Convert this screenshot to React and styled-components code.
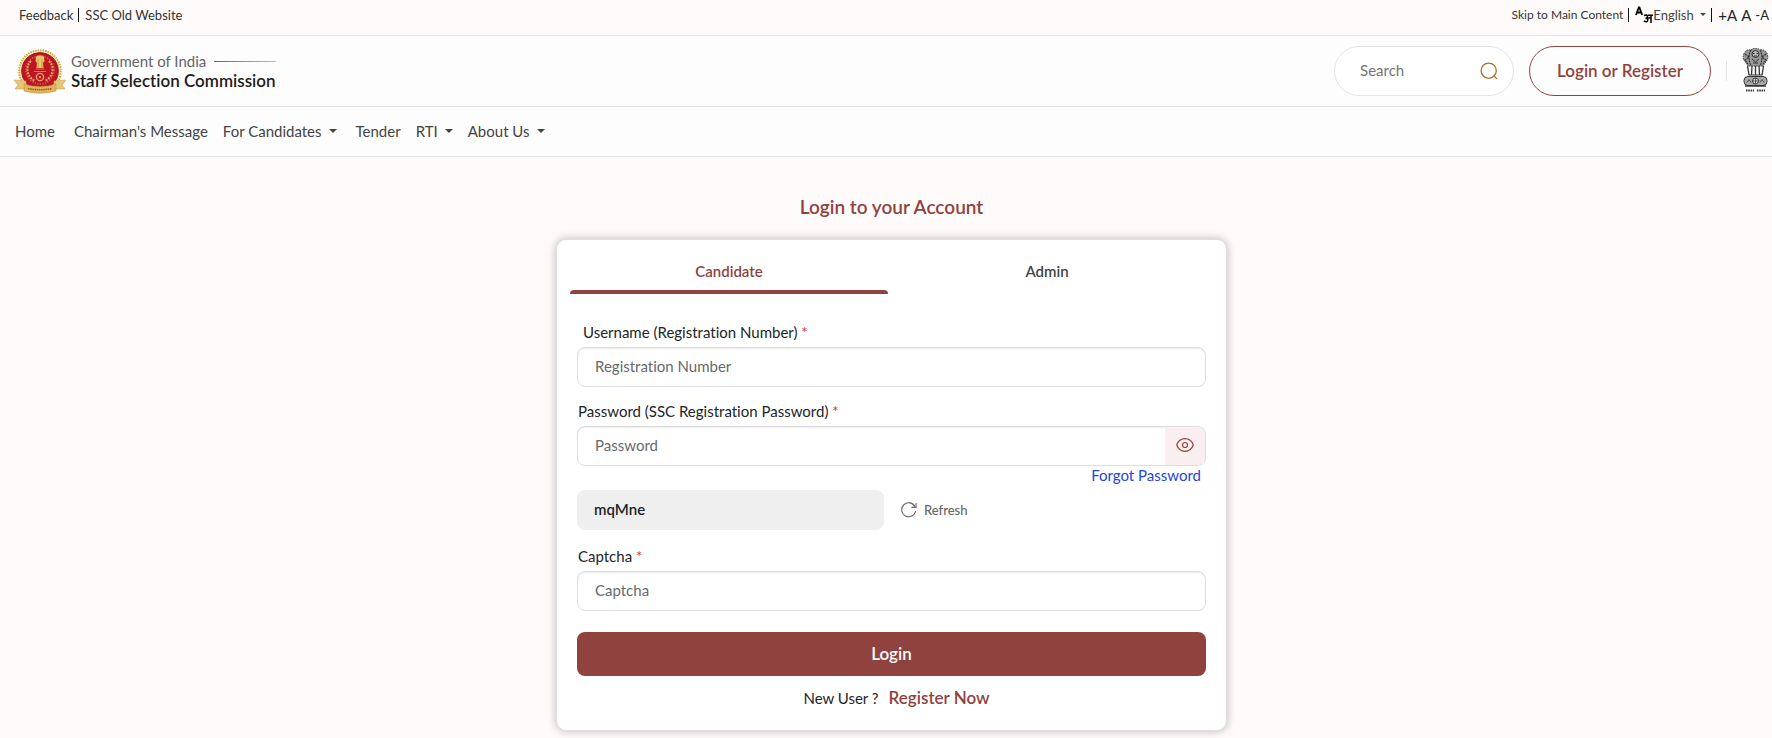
import { useState } from "react";
import styled, { createGlobalStyle } from "styled-components";

export default function App() {
    const [tab, setTab] = useState("candidate");
    const [showPassword, setShowPassword] = useState(false);

    const handleSubmit = (e) => {
        e.preventDefault();
    };

    return (
        <>
            <GlobalStyle />
            <TopBar>
                <TopGroup>
                    <TopLink href="#feedback">Feedback</TopLink>
                    <Separator />
                    <TopLink href="#old">SSC Old Website</TopLink>
                </TopGroup>
                <TopGroup>
                    <TopLink href="#main" $small>Skip to Main Content</TopLink>
                    <Separator />
                    <Language>
                        <LanguageIcon />
                        <LanguageSelect aria-label="Language" defaultValue="en">
                            <option value="en">English</option>
                        </LanguageSelect>
                        <Caret $small />
                    </Language>
                    <Separator />
                    <SizeButtons>
                        <SizeButton type="button" $size={15}>+A</SizeButton>
                        <SizeButton type="button" $size={15}>A</SizeButton>
                        <SizeButton type="button" $size={13}>-A</SizeButton>
                    </SizeButtons>
                </TopGroup>
            </TopBar>

            <Header>
                <Brand href="#home">
                    <CommissionLogo />
                    <BrandText>
                        <Government>Government of India</Government>
                        <Commission>Staff Selection Commission</Commission>
                    </BrandText>
                </Brand>
                <HeaderActions>
                    <SearchBox>
                        <SearchInput type="text" placeholder="Search" aria-label="Search" />
                        <SearchIcon />
                    </SearchBox>
                    <RegisterButton type="button">Login or Register</RegisterButton>
                    <Divider />
                    <Emblem />
                </HeaderActions>
            </Header>

            <Nav>
                <NavLink href="#home" $wide>Home</NavLink>
                <NavLink href="#chairman">Chairman's Message</NavLink>
                <NavButton type="button" $wide>For Candidates <Caret /></NavButton>
                <NavLink href="#tender">Tender</NavLink>
                <NavButton type="button">RTI <Caret /></NavButton>
                <NavButton type="button">About Us <Caret /></NavButton>
            </Nav>

            <Main id="main">
                <Title>Login to your Account</Title>
                <Card>
                    <Tabs role="tablist">
                        <Tab type="button" role="tab" aria-selected={tab === "candidate"} $active={tab === "candidate"} onClick={() => setTab("candidate")}>
                            Candidate
                        </Tab>
                        <Tab type="button" role="tab" aria-selected={tab === "admin"} $active={tab === "admin"} onClick={() => setTab("admin")}>
                            Admin
                        </Tab>
                    </Tabs>
                    <Form onSubmit={handleSubmit}>
                        <Label htmlFor="username" $indent>Username (Registration Number) <Required>*</Required></Label>
                        <InputGroup>
                            <Input id="username" type="text" placeholder="Registration Number" />
                        </InputGroup>

                        <Label htmlFor="password">Password (SSC Registration Password) <Required>*</Required></Label>
                        <InputGroup>
                            <Input id="password" type={showPassword ? "text" : "password"} placeholder="Password" />
                            <EyeButton type="button" aria-label="Show password" onClick={() => setShowPassword(!showPassword)}>
                                <EyeIcon />
                            </EyeButton>
                        </InputGroup>
                        <ForgotLink href="#forgot">Forgot Password</ForgotLink>

                        <CaptchaRow>
                            <CaptchaCode>mqMne</CaptchaCode>
                            <RefreshButton type="button">
                                <RefreshIcon />
                                Refresh
                            </RefreshButton>
                        </CaptchaRow>

                        <Label htmlFor="captcha">Captcha <Required>*</Required></Label>
                        <InputGroup>
                            <Input id="captcha" type="text" placeholder="Captcha" />
                        </InputGroup>

                        <LoginButton type="submit">Login</LoginButton>
                        <NewUser>
                            New User ? <RegisterLink href="#register">Register Now</RegisterLink>
                        </NewUser>
                    </Form>
                </Card>
            </Main>
        </>
    );
}

function Caret({ $small }) {
    return (
        <CaretSvg $small={$small} viewBox="0 0 8 4" aria-hidden="true">
            <path d="M0 0h8L4 4z" fill="currentColor" />
        </CaretSvg>
    );
}

function LanguageIcon() {
    return (
        <svg width="18" height="18" viewBox="0 0 18 18" fill="none" stroke="#000" strokeWidth="1.8" aria-hidden="true">
            <path d="M1 9L3.8 1.5h.6L7.2 9M2.2 6.5h3.9" />
            <path d="M9 9.500q3.500-1.500 3.500 1 0 1.500-2 1.700 2.500.2 2.300 2-.5 2.600-4 .8M12.500 12h3M13 9.200h5M16 9v8" strokeWidth="1.5" />
        </svg>
    );
}

function SearchIcon() {
    return (
        <svg width="18" height="18" viewBox="0 0 18 18" fill="none" stroke="#a5742e" strokeWidth="1.3" strokeLinecap="round" aria-hidden="true">
            <circle cx="8.7" cy="8.7" r="7.6" />
            <path d="M14 14l2.6 2.6" />
        </svg>
    );
}

function EyeIcon() {
    return (
        <svg width="18" height="14" viewBox="0 0 18 14" fill="none" stroke="#90423e" strokeWidth="1.2" aria-hidden="true">
            <path d="M.7 7C2.2 3 5.2.7 9 .7S15.8 3 17.3 7C15.8 11 12.8 13.3 9 13.3S2.200 11 .7 7z" />
            <circle cx="9" cy="7" r="2.5" />
        </svg>
    );
}

function RefreshIcon() {
    return (
        <svg width="16" height="16" viewBox="0 0 16 16" fill="none" stroke="#666" strokeWidth="1.1" aria-hidden="true">
            <path d="M14.6 9A7 7 0 1 1 14 4.7" />
            <path d="M15 1v4.4h-4.6" />
        </svg>
    );
}

function CommissionLogo() {
    return (
        <svg width="52" height="45" viewBox="0 0 52 45" aria-hidden="true">
            <circle cx="26" cy="22" r="20.8" fill="#f8ecc8" stroke="#d6a63c" strokeWidth="2" strokeDasharray="1.5 1" />
            <circle cx="26" cy="22" r="18.3" fill="#bd1620" stroke="#96121a" strokeWidth="1" />
            <circle cx="26" cy="21" r="14" fill="none" stroke="#d9645a" strokeWidth="1.6" strokeDasharray="1.2 1.4" />
            <path d="M17 12c-6 6-4 16 4 20M35 12c6 6 4 16-4 20" fill="none" stroke="#e0a26a" strokeWidth="2" strokeDasharray="2 1" />
            <path d="M22 8c1-2 7-2 8 0l.5 4-1.500 2 .5 5h-7l.5-5-1.500-2z" fill="#edc765" />
            <path d="M24 10v9M28 10v9M21.500 20h9" stroke="#c89032" strokeWidth=".8" />
            <path d="M20 22.500h12" stroke="#dc7468" />
            <circle cx="26" cy="28" r="3.6" fill="none" stroke="#e5a178" strokeWidth="1.4" />
            <circle cx="26" cy="28" r="1" fill="#edc765" />
            <path d="M0 31l12 1v8H1l3-4zM52 31l-12 1v8h11l-3-4z" fill="#e6c675" stroke="#c79a44" strokeWidth=".5" />
            <path d="M10 35q16 5 32 0v7q-16 4.500-32 0z" fill="#dfb65b" stroke="#b78431" strokeWidth=".5" />
            <path d="M14 39.500q12 2.500 24 0" fill="none" stroke="#9a5a25" strokeWidth="1.6" strokeDasharray="1.5 .7" />
        </svg>
    );
}

function Emblem() {
    return (
        <svg width="27" height="46" viewBox="0 0 27 46" fill="none" stroke="#333" aria-hidden="true">
            <path d="M9 2q4.500-4 9 0 5-1 7 3.500 2 5-1 8l-3 4.500H6l-3-4.500q-3-3-1-8Q4 1 9 2z" fill="#999" strokeWidth="1" strokeDasharray="1.5 1" />
            <path d="M9 2c-3 5-2 12 0 16M18 2c3 5 2 12 0 16M3 6l4 3-4 3 3 4M24 6l-4 3 4 3-3 4" strokeWidth="1.2" strokeDasharray="2 .7" />
            <circle cx="13.5" cy="6" r="3.5" fill="#bbb" />
            <path d="M11 5.500h1.500M14.500 5.500H16M12 8h3M10 11l3.500 3 3.500-3M11 15h5" />
            <path d="M5.500 18l1.500 9M10 18l-.5 9M13.500 18v9M17 18l.5 9M21.500 18L20 27" strokeWidth="1.3" />
            <path d="M6.500 27h14" />
            <rect x="2" y="28.5" width="23" height="9" rx="4" fill="#aaa" />
            <circle cx="13.5" cy="33" r="3" fill="#e8e8e8" />
            <path d="M5 34.500l2-3 2 3M18 34.500l2-3 2 3M13.500 30v6M10.500 33h6" strokeWidth=".8" />
            <path d="M3 38h21" strokeWidth="1.5" />
            <path d="M4 42.500h8M15 42.500h8" strokeWidth="1.8" strokeDasharray="1.5 .8" />
        </svg>
    );
}

const GlobalStyle = createGlobalStyle`
  * {
    box-sizing: border-box;
  }

  body {
    margin: 0;
    min-height: 100vh;
    background: #fffbfa;
    color: #212529;
    font-family: Lato, "Open Sans", sans-serif;
    font-size: 15px;
    font-variant-ligatures: none;
    line-height: 20px;
  }

  button, input, select {
    margin: 0;
    padding: 0;
    border: none;
    background: none;
    color: inherit;
    font-family: inherit;
    font-size: inherit;
    font-variant-ligatures: inherit;
    line-height: inherit;
  }

  button {
    cursor: pointer;
  }

  a {
    color: inherit;
    text-decoration: none;
  }

  svg {
    flex: none;
  }
`;

const TopBar = styled.div`
  display: flex;
  align-items: center;
  justify-content: space-between;
  height: 36px;
  padding: 0 3px 6px 19px;
  border-bottom: 1px solid #e3e3e6;
`;

const TopGroup = styled.div`
  display: flex;
  align-items: center;
`;

const TopLink = styled.a`
  color: #333;
  font-size: ${(props) => (props.$small ? 12 : 13)}px;
`;

const Separator = styled.span`
  width: 1px;
  height: 14px;
  margin: 0 6px 0 5px;
  background: #111;
`;

const Language = styled.span`
  display: flex;
  align-items: center;
`;

const LanguageSelect = styled.select`
  appearance: none;
  color: #444;
  font-size: 13px;
  margin-right: 6px;
`;

const CaretSvg = styled.svg`
  width: ${(props) => (props.$small ? 6 : 8)}px;
  height: ${(props) => (props.$small ? 3 : 4)}px;
  color: #444;
`;

const SizeButtons = styled.span`
  display: flex;
  align-items: center;
  gap: 4px;
`;

const SizeButton = styled.button`
  font-size: ${(props) => props.$size}px;
`;

const Header = styled.header`
  display: flex;
  align-items: center;
  justify-content: space-between;
  height: 71px;
  padding: 0 3px 0 14px;
  border-bottom: 1px solid #e3e3e6;
  background: #fdfdfd;
`;

const Brand = styled.a`
  display: flex;
  align-items: center;
  gap: 5px;
`;

const BrandText = styled.span`
  display: flex;
  flex-direction: column;
`;

const Government = styled.span`
  display: flex;
  align-items: center;
  gap: 8px;
  color: #666;

  &::after {
    content: "";
    flex: 1;
    height: 1px;
    background: linear-gradient(90deg, #b5443a, #efb478);
  }
`;

const Commission = styled.span`
  color: #1c1c1c;
  font-size: 17px;
  font-weight: 600;
`;

const HeaderActions = styled.div`
  display: flex;
  align-items: center;
  gap: 15px;
`;

const SearchBox = styled.div`
  display: flex;
  align-items: center;
  width: 180px;
  height: 50px;
  padding: 0 15px 0 25px;
  border: 1px solid #e5e5e5;
  border-radius: 25px;
  background: #fff;
`;

const SearchInput = styled.input`
  flex: 1;
  min-width: 0;
  padding-bottom: 2px;
  outline: none;

  &::placeholder {
    color: #757575;
  }
`;

const RegisterButton = styled.button`
  height: 50px;
  padding: 0 27px;
  border: 1px solid #90423e;
  border-radius: 25px;
  color: #90423e;
  font-size: 17px;
  font-weight: 600;
`;

const Divider = styled.span`
  width: 1px;
  height: 20px;
  background: #e3e3e6;
`;

const Nav = styled.nav`
  display: flex;
  align-items: center;
  gap: 15px;
  height: 50px;
  padding: 0 15px 2px;
  border-bottom: 1px solid #e3e3e6;
  background: #fdfdfd;
  color: #444;
`;

const NavLink = styled.a`
  margin-right: ${(props) => (props.$wide ? 4 : 0)}px;
`;

const NavButton = styled.button`
  display: flex;
  align-items: center;
  gap: 7px;
  margin-right: ${(props) => (props.$wide ? 4 : 0)}px;
`;

const Main = styled.main`
  display: flex;
  flex-direction: column;
  align-items: center;
  padding: 38px 0 6px 11px;
`;

const Title = styled.h1`
  margin: 0 0 20px;
  color: #90423e;
  font-size: 19px;
  font-weight: 600;
  line-height: 24px;
`;

const Card = styled.section`
  width: 100%;
  max-width: 671px;
  border: 1px solid #dfdfe2;
  border-radius: 10px;
  background: #fff;
  box-shadow: 0 0 10px rgba(0, 0, 0, 0.28);
`;

const Tabs = styled.div`
  display: flex;
  padding: 12px 20px 0 13px;
`;

const Tab = styled.button`
  flex: 1;
  height: 42px;
  padding-top: 9px;
  color: ${(props) => (props.$active ? "#90423e" : "#444")};
  font-weight: 600;

  &::after {
    content: "";
    display: block;
    height: 4px;
    margin-top: 9px;
    border-radius: 4px 4px 0 0;
    background: ${(props) => (props.$active ? "#90423e" : "transparent")};
  }
`;

const Form = styled.form`
  display: flex;
  flex-direction: column;
  padding: 28px 20px 20px;
`;

const Label = styled.label`
  margin: 0 0 5px ${(props) => (props.$indent ? 6 : 1)}px;
`;

const Required = styled.span`
  color: #f02c2c;
`;

const InputGroup = styled.div`
  display: flex;
  height: 40px;
  margin-bottom: 14px;
  border: 1px solid #dedee4;
  border-radius: 8px;
  box-shadow: inset 0 1px 1px rgba(0, 0, 0, 0.08);
  overflow: hidden;

  &:focus-within {
    border-color: #90423e;
  }
`;

const Input = styled.input`
  flex: 1;
  min-width: 0;
  padding: 0 17px 2px;
  outline: none;

  &::placeholder {
    color: #666a6e;
  }
`;

const EyeButton = styled.button`
  display: flex;
  align-items: center;
  justify-content: center;
  width: 40px;
  padding-bottom: 2px;
  background: #f9eef0;
`;

const ForgotLink = styled.a`
  align-self: flex-end;
  margin: -15px 5px 5px;
  color: #2446e0;
`;

const CaptchaRow = styled.div`
  display: flex;
  gap: 17px;
  margin-bottom: 16px;
`;

const CaptchaCode = styled.output`
  width: 307px;
  height: 40px;
  padding: 9px 17px;
  border-radius: 8px;
  background: #efefef;
  font-weight: 600;
`;

const RefreshButton = styled.button`
  display: flex;
  align-items: center;
  gap: 7px;
  color: #666;
  font-size: 13px;
  font-weight: 500;
`;

const LoginButton = styled.button`
  height: 44px;
  margin: 7px 0 10px;
  border-radius: 8px;
  background: #90423e;
  color: #fff;
  font-size: 17px;
  font-weight: 600;
`;

const NewUser = styled.p`
  display: flex;
  align-items: center;
  justify-content: center;
  gap: 10px;
  margin: 0;
  padding-left: 10px;
  line-height: 24px;
`;

const RegisterLink = styled.a`
  color: #90423e;
  font-size: 17px;
  font-weight: 600;
`;
